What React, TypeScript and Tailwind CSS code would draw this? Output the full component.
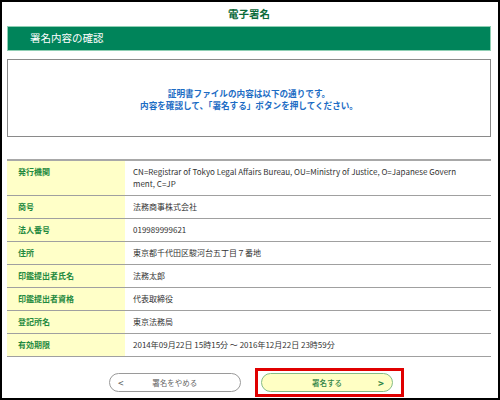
import React from "react";

const rows: { label: string; value: React.ReactNode }[] = [
  {
    label: "発行機関",
    value: (
      <>
        CN=Registrar of Tokyo Legal Affairs Bureau, OU=Ministry of Justice, O=Japanese Govern
        <br />
        ment, C=JP
      </>
    ),
  },
  { label: "商号", value: "法務商事株式会社" },
  { label: "法人番号", value: "019989999621" },
  { label: "住所", value: "東京都千代田区駿河台五丁目７番地" },
  { label: "印鑑提出者氏名", value: "法務太郎" },
  { label: "印鑑提出者資格", value: "代表取締役" },
  { label: "登記所名", value: "東京法務局" },
  { label: "有効期限", value: "2014年09月22日 15時15分 ～ 2016年12月22日 23時59分" },
];

export default function App() {
  return (
    <div
      className="w-[500px] h-[400px] bg-white border-2 border-black flex flex-col pl-[5px] pr-[7px] overflow-hidden"
      style={{ fontFamily: '"Noto Sans CJK JP", "Noto Sans", sans-serif' }}
    >
      <div className="h-[24px] flex items-center justify-center text-[10.5px] font-bold text-[#0b6b3a] leading-none">
        電子署名
      </div>
      <div className="h-[25px] bg-[#00845a] border border-[#8fcfb4] flex items-center pl-[22px] text-white text-[10.5px] leading-none">
        署名内容の確認
      </div>
      <div className="mt-[8px] h-[78px] border border-[#8a8a8a] flex flex-col items-center justify-center text-[#1c6cc4] font-bold text-[8.6px] leading-[12px] pt-[2px]">
        <div>証明書ファイルの内容は以下の通りです。</div>
        <div>内容を確認して、「署名する」ボタンを押してください。</div>
      </div>
      <div className="mt-[22px] border-t-2 border-[#a8a8a8]">
        {rows.map((r, i) => (
          <div key={i} className="flex border-b-[1.5px] border-[#a0a0a0]">
            <div className="w-[118px] shrink-0 bg-[#ffffc8] pl-[11px] py-[5px] text-[8px] leading-[12px] font-bold text-[#1f8a3f]">
              {r.label}
            </div>
            <div className="flex-1 pl-[8px] py-[5px] text-[8px] leading-[12px] text-[#333]">
              {r.value}
            </div>
          </div>
        ))}
      </div>
      <div className="mt-[16px] flex justify-center gap-[20px] pl-[4px]">
        <div className="w-[132px] h-[19px] rounded-full border border-[#9a9a9a] bg-white flex items-center px-[8px] text-[#666] text-[7.5px] leading-none">
          <span className="text-[10px] text-[#555]">&lt;</span>
          <span className="flex-1 text-center pr-[6px]">署名をやめる</span>
        </div>
        <div className="relative">
          <div className="w-[132px] h-[19px] rounded-full border border-[#86bd86] bg-[#ffffc4] flex items-center px-[8px] text-[#2f8444] text-[7.5px] leading-none">
            <span className="flex-1 text-center pl-[6px] font-medium">署名する</span>
            <span className="text-[10px] font-bold">&gt;</span>
          </div>
          <div className="absolute left-[-6px] right-[-11px] top-[-5px] bottom-[-5px] border-[3px] border-[#e00000] pointer-events-none" />
        </div>
      </div>
    </div>
  );
}
